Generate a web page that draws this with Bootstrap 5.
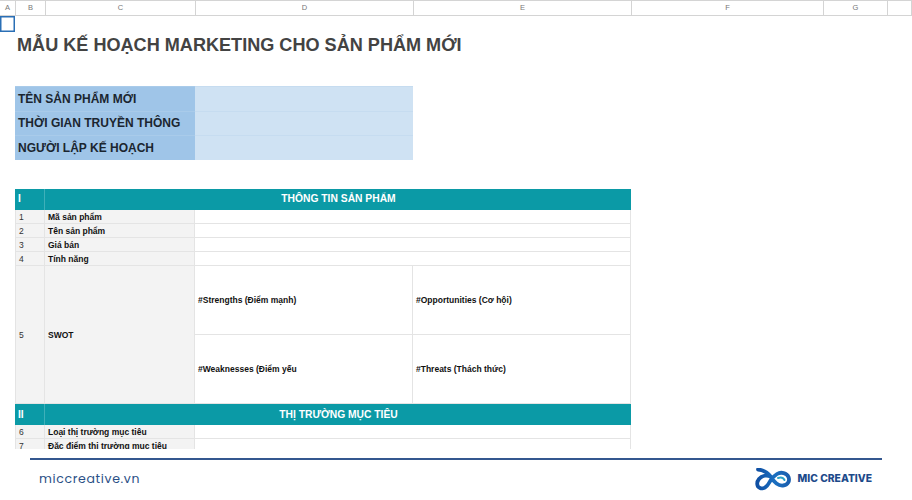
<!DOCTYPE html>
<html lang="vi">
<head>
<meta charset="utf-8">
<title>Mẫu kế hoạch marketing</title>
<link href="https://cdn.jsdelivr.net/npm/bootstrap@5.3.0/dist/css/bootstrap.min.css" rel="stylesheet">
<style>
html,body{height:500px;overflow:hidden;background:#fff}
body{font-family:"Liberation Sans",Arial,sans-serif}
.sheet-wrap{height:449px;overflow:hidden}
.col-heads{display:grid;grid-template-columns:16px 30px 150px 218px 218px 192px 64px 24px;height:16px;border-top:1px solid #d4d4d4;border-bottom:1px solid #d4d4d4;background:#fff}
.col-heads span{display:flex;align-items:center;justify-content:center;font-size:7.5px;color:#777;border-right:1px solid #d4d4d4}
table.sheet{table-layout:fixed;width:631px;border-collapse:separate;border-spacing:0;color:#111}
table.sheet td{padding:0 2px 0 3px;overflow:hidden;white-space:nowrap;vertical-align:middle;line-height:1}
.sel{box-shadow:inset 0 0 0 1.5px #2a6fb5}
.r-sel{height:16px}.r-title{height:26px}.r-gap1{height:28px}.r-blue{height:24.6px}.r-gap2{height:29px}
.r-sec{height:21.3px}.r-row{height:14px}.r-swot{height:69px}
.title{font-size:18.1px;font-weight:700;color:#434343}
table.sheet td.title{padding-left:2px}
.lbl{background:#9fc5e8;font-size:12px;font-weight:700;color:#1b2530;border-top:1px solid #a9cbea}
.val{background:#cfe2f3;border-top:1px solid #c6dcf0}
.sec{background:#0b9aa6;color:#fff;font-size:10.3px;font-weight:700}
.sec-l{border-right:1px solid #3fb0b9}
.num,.name,.cell{font-size:8.5px;border-right:1px solid #e4e4e4;border-bottom:1px solid #e4e4e4}
table.sheet td.num,table.sheet td.name,table.sheet td.cell{padding-top:1px}
.num{background:#f3f3f3;color:#333;border-left:1px solid #e4e4e4}
.name{background:#f3f3f3;font-weight:700}
.cell{font-weight:700}
.foot-line{height:2px;background:#34578f;margin:9px 30px 0}
.site{font-family:Poppins,Inter,"Open Sans",sans-serif;font-size:12.5px;letter-spacing:.65px;color:#2b4f86;padding-left:39px;padding-top:1px}
.brand{font-family:Inter,"Open Sans",sans-serif;font-weight:800;font-size:10.3px;color:#1c4a8a}
.foot{height:38px;padding-right:40px}
.logo{margin-right:-1px}
</style>
</head>
<body>
<div class="sheet-wrap">
  <div class="col-heads"><span>A</span><span>B</span><span>C</span><span>D</span><span>E</span><span>F</span><span>G</span><span></span></div>
  <table class="sheet">
    <colgroup><col style="width:15px"><col style="width:30px"><col style="width:150px"><col style="width:218px"><col style="width:218px"></colgroup>
    <tbody>
      <tr class="r-sel"><td class="sel"></td><td colspan="4"></td></tr>
      <tr class="r-title"><td></td><td colspan="4" class="title">MẪU KẾ HOẠCH MARKETING CHO SẢN PHẨM MỚI</td></tr>
      <tr class="r-gap1"><td colspan="5"></td></tr>
      <tr class="r-blue"><td></td><td colspan="2" class="lbl">TÊN SẢN PHẨM MỚI</td><td class="val"></td><td></td></tr>
      <tr class="r-blue"><td></td><td colspan="2" class="lbl">THỜI GIAN TRUYỀN THÔNG</td><td class="val"></td><td></td></tr>
      <tr class="r-blue"><td></td><td colspan="2" class="lbl">NGƯỜI LẬP KẾ HOẠCH</td><td class="val"></td><td></td></tr>
      <tr class="r-gap2"><td colspan="5"></td></tr>
      <tr class="r-sec"><td></td><td class="sec sec-l">I</td><td colspan="3" class="sec text-center">THÔNG TIN SẢN PHẨM</td></tr>
      <tr class="r-row"><td></td><td class="num">1</td><td class="name">Mã sản phẩm</td><td colspan="2" class="cell"></td></tr>
      <tr class="r-row"><td></td><td class="num">2</td><td class="name">Tên sản phẩm</td><td colspan="2" class="cell"></td></tr>
      <tr class="r-row"><td></td><td class="num">3</td><td class="name">Giá bán</td><td colspan="2" class="cell"></td></tr>
      <tr class="r-row"><td></td><td class="num">4</td><td class="name">Tính năng</td><td colspan="2" class="cell"></td></tr>
      <tr class="r-swot"><td></td><td rowspan="2" class="num">5</td><td rowspan="2" class="name">SWOT</td><td class="cell">#Strengths (Điểm mạnh)</td><td class="cell">#Opportunities (Cơ hội)</td></tr>
      <tr class="r-swot"><td></td><td class="cell">#Weaknesses (Điểm yếu</td><td class="cell">#Threats (Thách thức)</td></tr>
      <tr class="r-sec"><td></td><td class="sec sec-l">II</td><td colspan="3" class="sec text-center">THỊ TRƯỜNG MỤC TIÊU</td></tr>
      <tr class="r-row"><td></td><td class="num">6</td><td class="name">Loại thị trường mục tiêu</td><td colspan="2" class="cell"></td></tr>
      <tr class="r-row"><td></td><td class="num">7</td><td class="name">Đặc điểm thị trường mục tiêu</td><td colspan="2" class="cell"></td></tr>
    </tbody>
  </table>
</div>
<div class="foot-line"></div>
<div class="foot d-flex align-items-center justify-content-between">
  <div class="site">miccreative.vn</div>
  <div class="d-flex align-items-center gap-2">
    <svg class="logo" width="36" height="23" viewBox="0 0 36 23" fill="none" aria-label="MIC Creative logo">
      <defs><linearGradient id="lg" x1="0" y1="0" x2="1" y2="0"><stop offset="0" stop-color="#0f4fa3"/><stop offset=".55" stop-color="#1b6fc0"/><stop offset="1" stop-color="#1a5fae"/></linearGradient></defs>
      <path d="M3 1.500 C9 2 13 5 16 9 C19 14 23 18 28 17.500 C33 17 35 13 33.500 9 C32 5 26 3.500 22 6 C18 8.500 16 11 14 15 C12 19 8 21.500 5 20 C1.500 18.500 1.500 14 4 11 C7 7.500 12 6.500 16 9" stroke="url(#lg)" stroke-width="3.800" stroke-linecap="round"/>
      <path d="M23 10 C26 9 28.500 10 29.500 12" stroke="#2aa3c8" stroke-width="2" stroke-linecap="round"/>
    </svg>
    <span class="brand">MIC CREATIVE</span>
  </div>
</div>
<script src="https://cdn.jsdelivr.net/npm/bootstrap@5.3.0/dist/js/bootstrap.bundle.min.js"></script>
</body>
</html>
